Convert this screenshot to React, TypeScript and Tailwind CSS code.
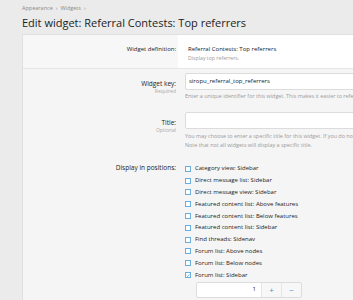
import React from "react";

const positions: { label: string; checked?: boolean }[] = [
  { label: "Category view: Sidebar" },
  { label: "Direct message list: Sidebar" },
  { label: "Direct message view: Sidebar" },
  { label: "Featured content list: Above features" },
  { label: "Featured content list: Below features" },
  { label: "Featured content list: Sidebar" },
  { label: "Find threads: Sidenav" },
  { label: "Forum list: Above nodes" },
  { label: "Forum list: Below nodes" },
  { label: "Forum list: Sidebar", checked: true },
];

function Box({ checked }: { checked?: boolean }) {
  return (
    <span className="relative flex h-[6px] w-[6px] shrink-0 items-center justify-center border border-[#6aaee0] bg-white">
      {checked && (
        <svg viewBox="0 0 8 8" className="h-[5px] w-[5px]">
          <path d="M1.3 4.2 L3.2 6 L6.8 1.8" fill="none" stroke="#3b8fd0" strokeWidth="1.3" />
        </svg>
      )}
    </span>
  );
}

export default function App() {
  return (
    <div
      className="h-[300px] w-[353px] overflow-hidden bg-[#ebebeb] text-[#1d1d1d]"
      style={{ fontFamily: '"Open Sans", "Noto Sans", sans-serif' }}
    >
      <div className="pl-[22px] pt-[3px]">
        <div className="flex items-center gap-[3px] text-[5.5px] leading-[10px] text-[#8a8a8a]">
          <span>Appearance</span>
          <span>›</span>
          <span>Widgets</span>
          <span>›</span>
        </div>
        <h1 className="mt-[3px] text-[11px] leading-[14px] font-normal text-[#1c1c1c]">
          Edit widget: Referral Contests: Top referrers
        </h1>
        <div className="mt-[4px] w-[400px] border border-[#e0e0e0] bg-[#f5f5f5]">
          {/* Row 1 */}
          <div className="flex border-b border-[#e6e6e6]">
            <div className="w-[155px] shrink-0 bg-[#f7f7f7] pr-[2px] pt-[10px] text-right text-[6px] leading-[9px] text-[#222]">
              Widget definition:
            </div>
            <div className="flex-1 bg-white pb-[5px] pl-[10px] pt-[10px]">
              <div className="text-[6px] leading-[9px] text-[#222]">Referral Contests: Top referrers</div>
              <div className="text-[5.2px] leading-[9px] text-[#999]">Display top referrers.</div>
            </div>
          </div>
          {/* Row 2 */}
          <div className="flex">
            <div className="w-[155px] shrink-0 pr-[2px] pt-[10px] text-right">
              <div className="text-[6.5px] leading-[9px] text-[#222]">Widget key:</div>
              <div className="text-[5px] leading-[7px] text-[#aaa]">Required</div>
            </div>
            <div className="flex-1 pl-[7px] pt-[4px]">
              <div className="flex h-[17px] items-center rounded-[2px] border border-[#dcdcdc] bg-white pl-[3px] text-[6px] text-[#222]">
                siropu_referral_top_referrers
              </div>
              <div className="mt-[2px] whitespace-nowrap text-[5.4px] leading-[9px] text-[#9a9a9a]">
                Enter a unique identifier for this widget. This makes it easier to reference this widget elsewhere.
              </div>
            </div>
          </div>
          {/* Row 3 */}
          <div className="flex">
            <div className="w-[155px] shrink-0 pr-[2px] pt-[17px] text-right">
              <div className="text-[6.5px] leading-[9px] text-[#222]">Title:</div>
              <div className="text-[5px] leading-[7px] text-[#aaa]">Optional</div>
            </div>
            <div className="flex-1 pl-[7px] pt-[11px]">
              <div className="h-[17px] rounded-[2px] border border-[#dcdcdc] bg-white" />
              <div className="mt-[3px] whitespace-nowrap text-[5.4px] leading-[9px] text-[#9a9a9a]">
                You may choose to enter a specific title for this widget. If you do not, the default title will be used.
              </div>
              <div className="whitespace-nowrap text-[5.4px] leading-[9px] text-[#9a9a9a]">
                Note that not all widgets will display a specific title.
              </div>
            </div>
          </div>
          {/* Row 4 */}
          <div className="flex pb-[20px]">
            <div className="w-[155px] shrink-0 pr-[2px] pt-[13px] text-right text-[6.5px] leading-[9px] text-[#222]">
              Display in positions:
            </div>
            <div className="flex-1 pl-[7px] pt-[13px]">
              <div className="flex flex-col">
                {positions.map((p) => (
                  <div key={p.label} className="flex h-[11.8px] items-center gap-[4px]">
                    <Box checked={p.checked} />
                    <span className="whitespace-nowrap text-[6px] leading-[9px] text-[#222]">{p.label}</span>
                  </div>
                ))}
              </div>
              <div className="ml-[11px] mt-[1px] flex h-[16px] w-[106px] items-stretch rounded-[2px] border border-[#dcdcdc] bg-white text-[6px]">
                <div className="flex flex-1 items-center justify-end pr-[5px] text-[#222]">1</div>
                <div className="flex w-[20px] items-center justify-center border-l border-[#e5e5e5] bg-[#f7f7f7] text-[8px] text-[#4a90c8]">+</div>
                <div className="flex w-[20px] items-center justify-center border-l border-[#e5e5e5] bg-[#f7f7f7] text-[8px] text-[#4a90c8]">−</div>
              </div>
            </div>
          </div>
        </div>
      </div>
    </div>
  );
}
